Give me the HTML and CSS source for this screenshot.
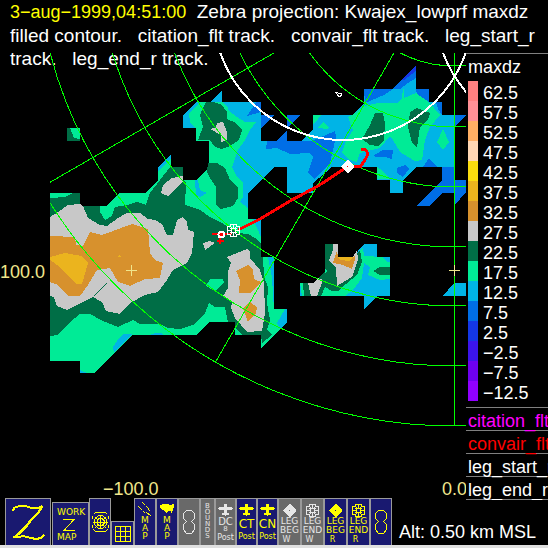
FILE: index.html
```html
<!DOCTYPE html>
<html lang="en">
<head>
    <meta charset="UTF-8">
    <meta name="viewport" content="width=device-width, initial-scale=1.0">
    <title>Zebra</title>
    <link rel="stylesheet" href="styles.css">
</head>
<body>
    <!-- shared icon shapes -->
    <svg class="defs" width="0" height="0" aria-hidden="true">
        <symbol id="plane" viewBox="0 0 15 12"><path fill="currentColor" d="M6 0h3v3h5v1h1v1h-1v1H9v3h2v2H8v1H7v-1H4V9h2V6H1V5H0V4h1V3h5z"/></symbol>
        <symbol id="diamond" viewBox="0 0 13 13"><path fill="currentColor" fill-rule="evenodd" d="M6 0h1l6 6v1l-6 6H6L0 7V6zM6 6v1h1V6z"/></symbol>
        <symbol id="legend-mark" viewBox="0 0 13 13"><path fill="none" stroke="currentColor" d="M3.500.5h6v2h3v8h-3v2h-6v-2h-3v-8h3zM6.500 0v5M6.500 8v5M0 6.500h5M8 6.500h5M4.500 3v7M8.500 3v7M3 4.500h7M3 8.500h7"/></symbol>
        <symbol id="eight" viewBox="0 0 14 24"><path fill="none" stroke="currentColor" d="M4.500.5h5l3 3v5l-3 3 3 3v5l-3 4h-5l-3-4v-5l3-3-3-3v-5z"/></symbol>
    </svg>

    <header class="title"><time>3−aug−1999,04:51:00</time>  Zebra projection: Kwajex_lowprf maxdz filled contour.   citation_flt track.   convair_flt track.   leg_start_r track.   leg_end_r track.</header>

    <main class="display">
        <svg class="map" viewBox="0 0 466 498" role="img" aria-label="maxdz filled contour">
            <defs>
                <clipPath id="area"><rect x="50" y="53" width="416" height="374"/></clipPath>
            </defs>

            <!-- 12.5 -->
            <g class="c12">
                <path d="M183 115L196 102H210L222 90V102H261V115H274L261 128V141H276L287 130V115H300L287 128V141H301L313 129V115H352L364 103V89H392L416 65V89H429V102H442V115H466L454 128V167H416L403 180V193H390V180H377V167H332L313 183V193H287V167H274L248 193V219H261V257H274V309H287V322L261 348V335H235V322H209L197 335H132L95 373H80V361H50V193H80V206H107L119 193H146L158 180V167L171 155V167H183V180H197L209 167V141H196V128H183Z"/>
                <path d="M300 283H313L325 272V244H338V257H353L364 244H377V257H390V296H377L364 309V296H300ZM443 296L454 283H466V296Z"/>
            </g>
            <!-- outside the echo between the two cells -->
            <path d="M261 128H287V130L276 141H261Z"/>
            <!-- 7.5 -->
            <g class="c7">
                <path d="M256 102H261V112L247 116 253 107ZM261 115H274L261 128ZM287 115H300L287 128ZM267 141H276L287 130V141H312L335 131 336 137 330 163 315 179 308 173 313 157 310 153 290 154 277 148 266 149Z"/>
                <path d="M364 89H393L384 95 365 103ZM392 89L416 65V78L408 83 400 89ZM416 89H429V102L417 94ZM436 102H442V115L438 109ZM454 115H466L454 128ZM373 156L383 150H393L392 159 385 157 376 157ZM397 168L405 165 409 169 403 177 397 173ZM423 167L429 158 437 167Z"/>
                <path d="M442 167H454V180H466V192L454 206V193H442L430 206H417L442 180Z"/>
            </g>
            <path class="c2" d="M416 65V71L404 80 401 80Z"/>
            <!-- 17.5 -->
            <g class="c17">
                <path d="M200 102H222L228 108 229 111 237 117 245 122H256L250 130 245 140 238 150 232 167 237 177 243 183V197L240 202 248 208V219H253L261 237V257H268L272 277 273 295 274 309H285L280 318 277 323 280 329 261 348V335H235V322H209L197 335H132L95 373H80V361H50V193H80V206H107L119 193H146L158 180V171L171 158V167H183V180H197L209 167V141H196V128L190 123 189 113Z"/>
                <path d="M365 106L378 103H397L402 98 403 89H404V98L416 93 423 98 429 102 440 115 430 127 425 140 422 160 415 161 400 152 393 140 390 136 380 148 360 153 357 162 350 160 342 153 345 143 353 130 348 117 352 115Z"/>
                <path d="M313 115H321L318 119 313 125ZM318 128L323 122 329 127 327 129ZM443 129L449 142 443 150 437 142ZM377 167L382 170 390 179H377ZM300 283H313L325 272V244H338V257H353L363 247 364 256 383 257 387 262H390V279L380 280 368 275 370 267 364 263 362 278 353 290 345 296H302Z"/>
            </g>
            <path class="c12" d="M119 338L124 334H132L114 352 113 347ZM80 370L87 373H80ZM150 335L155 333H161L164 335ZM195 180H198L200 190 207 193 200 197 196 195Z"/>
            <!-- 22.5 -->
            <g class="c22">
                <path d="M67 128H80V141H67ZM206 102H213L222 105 227 112V119L236 123 242 130 239 140 230 146 221 149 215 147 210 140H198L203 127 200 115 203 108ZM208 163H217L225 168 230 180 238 188V198L233 206 221 209 216 205V187L210 178 207 172Z"/>
                <path fill-rule="evenodd" d="M50 198L65 197 73 193H80V206H100V212L105 220 112 216 115 207 127 205 137 202 146 205 150 193 170 167H183V180L186 183 185 205 200 210 210 217 222 223 228 227 238 233 248 234 255 238 261 244V257H263L264 277 268 287 267 303 270 320 267 330 272 335 262 343 261 335H242L235 328V322H228L225 307H215L209 303 205 313 193 325 180 329 168 328 160 324H140L133 320 118 327 103 321 90 314H80L70 322 57 335 50 336ZM210 279H223L224 283 215 291 206 286Z"/>
                <path d="M375 113H383L385 123 384 140 378 146 370 145 362 139 370 125ZM410 112L417 108 430 113 428 120 420 127 417 148 412 143 408 127Z"/>
                <path d="M325 244H338V257H353L360 250 362 262 357 275 346 284 338 291H332L325 287 321 296H304L303 283H313L325 272ZM373 271L380 267H390V275H380Z"/>
            </g>
            <path class="c17" d="M70 128H80V139L74 138ZM325 268L327 271 325 274Z"/>
            <!-- 27.5 -->
            <g class="c27">
                <path d="M50 217L58 212 68 205 80 204 83 206 88 218 100 225 107 226 118 218 127 213H140L148 219 155 220 162 224 167 235H173L177 220 183 217 187 222 188 230 194 232 192 253 187 263 173 270 167 280 158 292 145 295 130 303 120 314 106 311 102 302 93 297 67 310 57 306 54 297 50 296Z"/>
                <path d="M217 123L223 122 227 132V140L221 142V135L210 129 216 127ZM161 193L163 185 172 178 183 176V182L172 192 168 196ZM203 243L210 241 215 243 205 250ZM227 257L247 249 250 252V258L260 270 264 282 265 313 262 331 247 332 235 318 231 308 232 302 223 296 228 288V272L231 263Z"/>
                <path d="M333 244H338V257H353L357 250 358 260 352 277 337 286 336 268 329 260 333 250ZM308 283H313L318 278 323 280 317 296H311Z"/>
            </g>
            <path class="streak" d="M94 296L107 283"/>
            <!-- 32.5 -->
            <g class="c32">
                <path d="M50 236L75 237 76 245 83 246 90 232 102 235 132 224 148 229 150 253 155 260 163 263 160 278 145 279 130 286 118 282 110 268 97 270 88 285 80 296H68L58 285 50 282Z"/>
                <path d="M236 271L248 265 253 270 254 279 261 282 250 293H239L240 280ZM243 308L250 302 257 307 256 313 248 322 245 314ZM337 250L338 257H353L355 255V260L352 269 343 265 333 263Z"/>
            </g>
            <!-- 37.5 -->
            <path class="c37" d="M50 257L65 253 82 256 88 263 82 284H76L67 275 60 267 50 260ZM117 257L119 255 122 257ZM338 257H353L350 261 340 260Z"/>

            <!-- range rings and radials -->
            <g class="rings" clip-path="url(#area)">
                <circle cx="454" cy="-51" r="117"/>
                <circle cx="454" cy="-51" r="178"/>
                <circle cx="454" cy="-51" r="238"/>
                <circle cx="454" cy="-51" r="298"/>
                <circle cx="454" cy="-51" r="357"/>
                <circle cx="454" cy="-51" r="417"/>
                <circle cx="454" cy="-51" r="477"/>
                <path d="M454.500-51V426M454-51L215.500 362M454-51L41 187.500"/>
            </g>

            <!-- white rings -->
            <g class="range" clip-path="url(#area)">
                <circle cx="343" cy="10" r="130"/>
                <path d="M443 53Q452 76 467 93"/>
            </g>
            <path class="islet" d="M335.500 92.500h2l1 1h3v2l-2 1-2-1v-1z"/>

            <!-- grid ticks -->
            <path class="tick" d="M126 270.500h11M131.500 265v11M449 270.500h11M454.500 265v11"/>

            <!-- tracks -->
            <path class="track" d="M238 230L260 219 290 201 318 186 347 167M347 166H361L366 158 368 154 366 150 361 149"/>
            <path class="track thin" d="M212 234H232M217 241H224M220 236V244"/>
            <circle class="spot" cx="221.500" cy="234.500" r="3"/>
            <use href="#legend-mark" class="mark" x="227" y="224" width="13" height="13"/>
            <use href="#diamond" class="mark" x="341" y="160" width="13" height="13"/>
            <path class="dot" d="M347 166h1v1h-1z"/>

            <!-- axis labels -->
            <g class="axis">
                <text x="0" y="278">100.0</text>
                <text x="103" y="495">−100.0</text>
                <text x="442" y="495">0.0</text>
            </g>
        </svg>

        <aside class="legend">
            <h2>maxdz</h2>
            <ul class="scale">
                <li class="s62">62.5</li>
                <li class="s57">57.5</li>
                <li class="s52">52.5</li>
                <li class="s47">47.5</li>
                <li class="s42">42.5</li>
                <li class="s37">37.5</li>
                <li class="s32">32.5</li>
                <li class="s27">27.5</li>
                <li class="s22">22.5</li>
                <li class="s17">17.5</li>
                <li class="s12">12.5</li>
                <li class="s7">7.5</li>
                <li class="s2">2.5</li>
                <li class="sm2">−2.5</li>
                <li class="sm7">−7.5</li>
                <li class="sm12">−12.5</li>
            </ul>
            <ul class="platforms">
                <li class="citation">citation_flt</li>
                <li class="convair">convair_flt</li>
                <li>leg_start_r</li>
                <li>leg_end_r</li>
            </ul>
        </aside>
    </main>

    <footer class="bar">
        <button class="tool logo" aria-label="Zebra">
            <svg width="34" height="36" viewBox="0 0 34 36"><path fill="none" stroke="currentColor" stroke-width="2" d="M2 7l1-3 5-2h6l7 2h6l4-2M30 3l-3 6-6 6-7 8-6 6-4 4M2 33h6l4-1 8 2 5 1 5-1 3-3"/><path fill="none" stroke="currentColor" d="M32 2l-4 7-7 7-6 8-6 6-7 4"/></svg>
        </button>
        <button class="tool work">
            <span>WORK</span>
            <svg width="12" height="14" viewBox="0 0 12 14"><path fill="none" stroke="currentColor" d="M0 1.500h11L1 12.500h11"/></svg>
            <span>MAP</span>
        </button>
        <button class="tool rings-btn" aria-label="Range rings">
            <svg width="17" height="20" viewBox="0 0 17 20"><path fill="none" stroke="currentColor" d="M1.500 2.500l2-2h10l2 2M1.500 17.500l2 2h10l2-2M6.500 3.500h4l4 4v5l-4 4h-4l-4-4v-5zM7 6.500h3l2 2v3l-2 2H7l-2-2v-3zM8.500 3v14M1 10.500h15M3 5l3 3M14 5l-3 3M3 16l3-3M14 16l-3-3M.5 4v3M.5 13v3M16.500 4v3M16.500 13v3"/></svg>
        </button>
        <button class="tool grid-btn" aria-label="Grid">
            <svg width="16" height="16" viewBox="0 0 16 16"><path fill="none" stroke="currentColor" d="M.5.5h15v15H.5zM5.500 0v16M10.500 0v16M0 5.500h16M0 10.500h16"/></svg>
        </button>
        <button class="tool stack">
            <svg width="14" height="14" viewBox="0 0 14 14"><path fill="none" stroke="currentColor" d="M4 0l3 3M8 4l3 3M0 4l4 4M5 9l2 2M8 10l5 4M10 7l2 2"/></svg>
            <span>M</span><span>A</span><span>P</span>
        </button>
        <button class="tool stack">
            <svg width="14" height="14" viewBox="0 0 14 14"><path fill="currentColor" d="M0 3h1l1-1h6l1 1h2l2-1h1v3l-1 1v2l-1 1v2h-1V9H9L7 10l-1 1-1-2-2-1-2-1-1-2z"/></svg>
            <span>M</span><span>A</span><span>P</span>
        </button>
        <button class="tool off eight" aria-label="Station">
            <svg width="14" height="24"><use href="#eight"/></svg>
        </button>
        <button class="tool off bounds"><span>B</span><span>O</span><span>U</span><span>N</span><span>D</span><span>S</span></button>
        <button class="tool off flight"><svg width="15" height="12"><use href="#plane"/></svg><span class="small">DC</span><span class="tiny">8</span><span class="post">Post</span></button>
        <button class="tool flight"><svg width="15" height="12"><use href="#plane"/></svg><span class="big">CT</span><span class="post">Post</span></button>
        <button class="tool flight"><svg width="15" height="12"><use href="#plane"/></svg><span class="big">CN</span><span class="post">Post</span></button>
        <button class="tool off leg"><svg width="13" height="13"><use href="#diamond"/></svg><span>LEG</span><span>BEG</span><span class="kind">W</span></button>
        <button class="tool off leg"><svg width="13" height="13"><use href="#legend-mark"/></svg><span>LEG</span><span>END</span><span class="kind">W</span></button>
        <button class="tool leg"><svg width="13" height="13"><use href="#diamond"/></svg><span>LEG</span><span>BEG</span><span class="kind">R</span></button>
        <button class="tool leg"><svg width="13" height="13"><use href="#legend-mark"/></svg><span>LEG</span><span>END</span><span class="kind">R</span></button>
        <button class="tool eight" aria-label="Station"><svg width="14" height="24"><use href="#eight"/></svg></button>
        <p class="alt">Alt: 0.50 km MSL</p>
    </footer>
</body>
</html>
```

FILE: styles.css
```css
:root {
    --navy: #191970;
    --off: #696969;
    --edge: #9a9a9a;
    --khaki: #f0e68c;
    --line: #808080;
}
* { margin: 0; padding: 0; box-sizing: border-box; }
body {
    min-height: 100vh;
    display: flex;
    flex-direction: column;
    background: #000;
    color: #fff;
    font-family: "Liberation Sans", Arial, sans-serif;
    font-size: 18px;
    line-height: 23px;
    overflow-x: hidden;
}
.defs { position: absolute; }

/* the title lies over the top of the map */
.title { position: absolute; top: 0; left: 0; right: 0; padding: 0 10px; font-size: 19px; white-space: pre-wrap; }
.title time { color: #ff0; font-size: 18px; }

.display { position: relative; z-index: 1; flex: 1; display: grid; grid-template-columns: 1fr 82px; align-items: start; }
.map { display: block; width: 100%; shape-rendering: crispEdges; }
.c2 { fill: #1437e6; }
.c7 { fill: #006ee6; }
.c12 { fill: #00b4e6; }
.c17 { fill: #00eb96; }
.c22 { fill: #006e46; }
.c27 { fill: #c8c8c8; }
.c32 { fill: #d7912d; }
.c37 { fill: #ebb41e; }
.streak { stroke: #006e46; }
.rings { fill: none; stroke: #0f0; }
.range { fill: none; stroke: #fff; stroke-width: 2; }
.islet { fill: none; stroke: #fff; }
.tick { stroke: var(--khaki); }
.track { fill: none; stroke: #f00; stroke-width: 3; }
.thin { stroke-width: 2; }
.spot { fill: #f00; stroke: #fff; stroke-width: 2; }
.mark { color: #fff; }
.dot { fill: #f00; }
.axis { fill: var(--khaki); font-size: 18px; }

/* legend, its last rule runs into the icon bar */
.legend { margin-top: 53px; margin-bottom: -2px; border-top: 1px solid var(--line); overflow: hidden; white-space: nowrap; }
.legend h2 { padding: 2px; font-size: 18px; font-weight: normal; }
.legend ul { list-style: none; }
.scale { margin-bottom: 6px; }
.scale li { height: 20px; margin-left: 2px; padding-left: 5px; border-left-width: 10px; border-left-style: solid; line-height: 24px; }
.s62 { border-color: #ff8080; }
.s57 { border-color: #ff9096; }
.s52 { border-color: #ffaf64; }
.s47 { border-color: #ffd7b4; }
.s42 { border-color: #fadc0f; }
.s37 { border-color: #ebb41e; }
.s32 { border-color: #d7912d; }
.s27 { border-color: #c8c8c8; }
.s22 { border-color: #006e46; }
.s17 { border-color: #00eb96; }
.s12 { border-color: #00b4e6; }
.s7 { border-color: #006ee6; }
.s2 { border-color: #1437e6; }
.sm2 { border-color: #3c14eb; }
.sm7 { border-color: #6e00f0; }
.sm12 { border-color: #9100ff; }
.platforms { border-top: 1px solid var(--line); }
.platforms li { height: 23px; padding-left: 2px; border-bottom: 1px solid var(--line); line-height: 26px; }
.citation { color: #f0f; }
.convair { color: #f00; }

/* icon bar */
.bar { display: flex; align-items: flex-end; padding-left: 5px; border-bottom: 3px solid #e0e0e0; }
.tool {
    flex: none;
    width: 22px;
    height: 47px;
    display: flex;
    flex-direction: column;
    align-items: center;
    border: 1px solid var(--edge);
    border-bottom: none;
    background: var(--navy);
    color: #ff0;
    font-family: "DejaVu Sans", sans-serif;
    font-size: 9px;
    line-height: 9px;
    cursor: pointer;
    overflow: hidden;
}
.tool svg { flex: none; shape-rendering: crispEdges; }
.off { background: var(--off); color: #e6e6e6; }
.logo { width: 46px; justify-content: center; margin-right: 1px; }
.work { width: 37px; height: 43px; padding: 5px 4px; align-items: flex-start; }
.work svg { margin: 1px 6px; }
.rings-btn { justify-content: center; }
.grid-btn { height: 24px; padding-top: 4px; width: 23px; }
.stack { padding-top: 3px; }
.stack span { line-height: 8px; }
.eight { justify-content: center; }
.bounds { width: 15px; padding-top: 4px; font-size: 7px; }
.bounds span { line-height: 6px; }
.flight { width: 21px; padding-top: 5px; }
.flight svg { margin-bottom: 1px; }
.small { font-size: 10px; line-height: 9px; }
.tiny { font-size: 7px; line-height: 6px; }
.big { font-size: 12px; line-height: 14px; }
.post { font-size: 8px; line-height: 11px; }
.leg { width: 23px; padding-top: 5px; }
.kind { padding-right: 6px; font-size: 8px; line-height: 10px; }
.alt { padding: 0 0 1px 7px; white-space: nowrap; }
```
